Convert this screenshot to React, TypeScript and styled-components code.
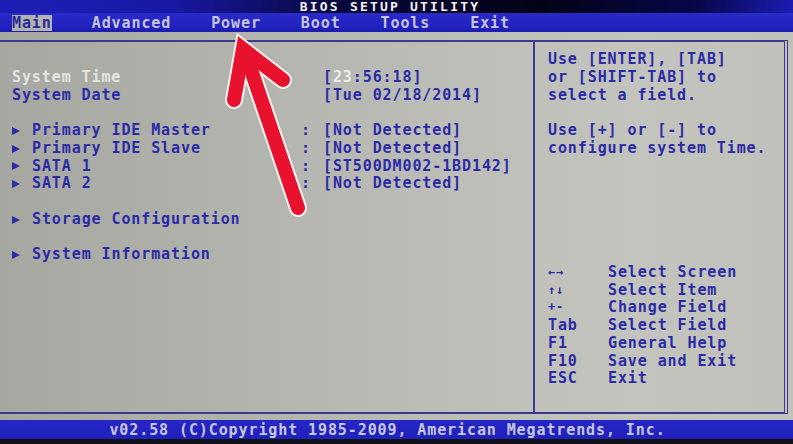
import styled, { createGlobalStyle } from 'styled-components';

const GlobalStyle = createGlobalStyle`
  html, body {
    margin: 0;
    padding: 0;
    background: #000;
  }
  body {
    width: 793px;
    height: 444px;
    overflow: hidden;
  }
`;

const LINE = 17.75;
const TEXT_BLUE = '#2b2ba6';
const FRAME = '#3a3a8e';

const Screen = styled.div`
  position: relative;
  width: 793px;
  height: 444px;
  display: flex;
  flex-direction: column;
  overflow: hidden;
  background: #000;
  font-family: 'DejaVu Sans Mono', 'Liberation Mono', monospace;
  font-weight: 700;
  font-size: 15px;
  letter-spacing: 0.9px;
`;

const TitleBar = styled.header`
  height: 13px;
  display: flex;
  justify-content: center;
  align-items: center;
  padding-right: 13px;
  background: linear-gradient(
    90deg,
    #1e1eb6 0%,
    #1818a4 22%,
    #08083e 42%,
    #030316 68%,
    #07074a 88%,
    #1c1cb4 100%
  );
`;

const Title = styled.h1`
  margin: 0;
  font-size: 13px;
  line-height: 13px;
  letter-spacing: 2.2px;
  font-weight: 700;
  color: #f2f2f2;
`;

const MenuBar = styled.nav`
  height: 19px;
  display: flex;
  align-items: center;
  gap: 40px;
  padding-left: 12px;
  background: linear-gradient(180deg, #2a2ac8 0%, #2222c0 70%, #1c1cae 100%);
`;

const MenuItem = styled.span<{ $active?: boolean }>`
  height: 16px;
  line-height: 16px;
  color: ${(p) => (p.$active ? '#2a2a9c' : '#c6c6dc')};
  background: ${(p) => (p.$active ? '#b2b3ad' : 'transparent')};
`;

const Body = styled.main`
  height: 388px;
  box-sizing: border-box;
  padding: 8px 5px 0 0;
  background: linear-gradient(
    90deg,
    #a6a7a1 0%,
    #b2b3ad 30%,
    #bcbdb7 55%,
    #c3c4be 80%,
    #c0c1bb 100%
  );
`;

const Frame = styled.section`
  height: 370px;
  display: flex;
  border-top: 2px solid ${FRAME};
  border-bottom: 2px solid ${FRAME};
  border-right: 4px double ${FRAME};
`;

const LeftPanel = styled.div`
  flex: 0 0 535px;
  box-sizing: border-box;
  padding: 9px 0 0 12px;
  border-right: 2px solid ${FRAME};
`;

const RightPanel = styled.div`
  flex: 1;
  display: flex;
  flex-direction: column;
  padding: 9px 0 24px 13px;
`;

const Group = styled.div<{ $gap?: number }>`
  margin-top: ${(p) => (p.$gap ?? 0) * LINE}px;
`;

const Row = styled.div`
  display: grid;
  grid-template-columns: 20px 269px 22px 1fr;
  height: ${LINE}px;
  line-height: ${LINE}px;
  color: ${TEXT_BLUE};
  white-space: pre;
`;

const Label = styled.span<{ $wide?: boolean; $selected?: boolean }>`
  grid-column: ${(p) => (p.$wide ? '1 / 3' : '2 / 3')};
  color: ${(p) => (p.$selected ? '#e4e4e2' : 'inherit')};
`;

const Pointer = styled.span`
  align-self: center;
  width: 0;
  height: 0;
  border-left: 8px solid ${TEXT_BLUE};
  border-top: 4px solid transparent;
  border-bottom: 4px solid transparent;
`;

const Colon = styled.span`
  grid-column: 3;
`;

const Value = styled.span`
  grid-column: 4;
`;

const Hi = styled.span`
  color: #ececec;
`;

const HelpLine = styled.div`
  height: ${LINE}px;
  line-height: ${LINE}px;
  color: ${TEXT_BLUE};
  white-space: pre;
`;

const Legend = styled.div`
  margin-top: auto;
`;

const LegendRow = styled.div`
  display: grid;
  grid-template-columns: 60px 1fr;
  height: ${LINE}px;
  line-height: ${LINE}px;
  color: ${TEXT_BLUE};
  white-space: pre;
`;

const LegendKey = styled.span<{ $small?: boolean }>`
  font-size: ${(p) => (p.$small ? '12px' : '15px')};
`;

const Footer = styled.footer`
  height: 19px;
  display: flex;
  align-items: center;
  justify-content: center;
  padding-right: 18px;
  color: #c8c8dc;
  background: linear-gradient(180deg, #2626c6 0%, #2020bc 100%);
  white-space: pre;
`;

const BottomEdge = styled.div`
  height: 5px;
  background: #111118;
`;

const ArrowLayer = styled.svg`
  position: absolute;
  inset: 0;
  pointer-events: none;
`;

const menus = ['Main', 'Advanced', 'Power', 'Boot', 'Tools', 'Exit'];

const drives = [
  ['Primary IDE Master', '[Not Detected]'],
  ['Primary IDE Slave', '[Not Detected]'],
  ['SATA 1', '[ST500DM002-1BD142]'],
  ['SATA 2', '[Not Detected]'],
];

const legend: [string, string, boolean?][] = [
  ['←→', 'Select Screen', true],
  ['↑↓', 'Select Item', true],
  ['+-', 'Change Field', true],
  ['Tab', 'Select Field'],
  ['F1', 'General Help'],
  ['F10', 'Save and Exit'],
  ['ESC', 'Exit'],
];

const App = () => {
  return (
    <Screen>
      <GlobalStyle />
      <TitleBar>
        <Title>BIOS SETUP UTILITY</Title>
      </TitleBar>
      <MenuBar>
        {menus.map((m, i) => (
          <MenuItem key={m} $active={i === 0}>
            {m}
          </MenuItem>
        ))}
      </MenuBar>
      <Body>
        <Frame>
          <LeftPanel>
            <Group $gap={1}>
              <Row>
                <Label $wide $selected>System Time</Label>
                <Value>
                  [<Hi>23</Hi>:56:18]
                </Value>
              </Row>
              <Row>
                <Label $wide>System Date</Label>
                <Value>[Tue 02/18/2014]</Value>
              </Row>
            </Group>
            <Group $gap={1}>
              {drives.map(([name, val]) => (
                <Row key={name}>
                  <Pointer />
                  <Label>{name}</Label>
                  <Colon>:</Colon>
                  <Value>{val}</Value>
                </Row>
              ))}
            </Group>
            <Group $gap={1}>
              <Row>
                <Pointer />
                <Label>Storage Configuration</Label>
              </Row>
            </Group>
            <Group $gap={1}>
              <Row>
                <Pointer />
                <Label>System Information</Label>
              </Row>
            </Group>
          </LeftPanel>
          <RightPanel>
            <HelpLine>Use [ENTER], [TAB]</HelpLine>
            <HelpLine>or [SHIFT-TAB] to</HelpLine>
            <HelpLine>select a field.</HelpLine>
            <Group $gap={1}>
              <HelpLine>Use [+] or [-] to</HelpLine>
              <HelpLine>configure system Time.</HelpLine>
            </Group>
            <Legend>
              {legend.map(([k, d, small]) => (
                <LegendRow key={k}>
                  <LegendKey $small={small}>{k}</LegendKey>
                  <span>{d}</span>
                </LegendRow>
              ))}
            </Legend>
          </RightPanel>
        </Frame>
      </Body>
      <Footer>v02.58 (C)Copyright 1985-2009, American Megatrends, Inc.</Footer>
      <BottomEdge />
      <ArrowLayer viewBox="0 0 793 444" width="793" height="444">
        <g fill="none" stroke="#f4f0f0" strokeWidth="18">
          <path d="M234 100 L243 49 L283 80" strokeLinecap="round" strokeLinejoin="miter" />
          <path d="M247 58 L298 208" strokeLinecap="round" />
        </g>
        <g fill="none" stroke="#e8112e" strokeWidth="14">
          <path d="M234 100 L243 49 L283 80" strokeLinecap="round" strokeLinejoin="miter" />
          <path d="M247 58 L298 208" strokeLinecap="round" />
        </g>
      </ArrowLayer>
    </Screen>
  );
};

export default App;
